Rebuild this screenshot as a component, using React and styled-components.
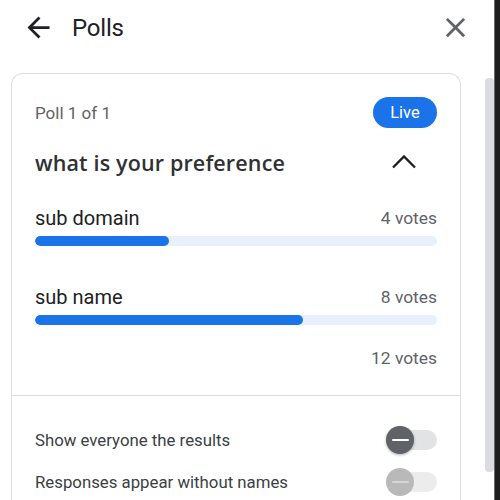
import React from "react";
import styled, { createGlobalStyle } from "styled-components";

const Global = createGlobalStyle`
  html, body { margin: 0; padding: 0; background: #ffffff; }
  body { font-family: Roboto, "Noto Sans", Arial, sans-serif; color: #202124; }
  * { box-sizing: border-box; }
`;

const Frame = styled.div`
  display: flex;
  width: 500px;
  height: 500px;
  overflow: hidden;
  background: #fff;
`;

const Content = styled.div`
  flex: 1;
  display: flex;
  flex-direction: column;
  min-width: 0;
`;

const Gutter = styled.div`
  width: 10px;
  padding: 78px 0 28px 1px;
  display: flex;
`;

const Thumb = styled.div`
  width: 9px;
  flex: 1;
  border-radius: 4px;
  background: #dadce0;
`;

const Edge = styled.div`
  width: 6px;
  background: #1e1e1f;
  border-left: 1px solid #6b6b6b;
`;

const Header = styled.header`
  height: 55px;
  flex-shrink: 0;
  display: flex;
  align-items: center;
  padding: 0 12px 0 22px;
`;

const IconButton = styled.div`
  width: 33px;
  height: 33px;
  display: flex;
  align-items: center;
  justify-content: center;
  color: ${(p) => p.$color || "#202124"};
  svg { display: block; }
`;

const Title = styled.h1`
  flex: 1;
  margin: 0 0 0 17px;
  font-size: 24px;
  font-weight: 400;
  color: #202124;
  letter-spacing: -0.2px;
`;

const Card = styled.section`
  margin: 18px 23px 0 11px;
  border: 1px solid #dadce0;
  border-bottom: none;
  border-radius: 12px 12px 0 0;
  flex: 1;
  display: flex;
  flex-direction: column;
`;

const PollBody = styled.div`
  padding: 23px 23px 25px 23px;
  display: flex;
  flex-direction: column;
`;

const Row = styled.div`
  display: flex;
  align-items: center;
  justify-content: ${(p) => (p.$end ? "flex-end" : "space-between")};
  height: ${(p) => p.$h || 24}px;
  margin-top: ${(p) => p.$mt || 0}px;
`;

const Meta = styled.span`
  font-size: 17px;
  color: #5f6368;
`;

const Badge = styled.span`
  width: 64px;
  height: 31px;
  border-radius: 16px;
  background: #1a73e8;
  color: #fff;
  font-size: 16.5px;
  display: flex;
  align-items: center;
  justify-content: center;
`;

const Question = styled.h2`
  margin: 0;
  font-family: "Open Sans", Roboto, sans-serif;
  font-size: 21.5px;
  font-weight: 600;
  letter-spacing: 0.15px;
  color: #303134;
`;

const ChevronBox = styled.div`
  width: 34px;
  display: flex;
  justify-content: center;
  margin-right: 16px;
  svg { display: block; }
`;

const Option = styled.div`
  display: flex;
  flex-direction: column;
  margin-top: ${(p) => p.$mt}px;
`;

const Label = styled.span`
  font-size: 20px;
  color: #202124;
`;

const Votes = styled.span`
  font-size: 17.4px;
  color: #5f6368;
`;

const Track = styled.div`
  margin-top: 6px;
  height: 10px;
  border-radius: 5px;
  background: #e8f0fe;
  overflow: hidden;
`;

const Fill = styled.div`
  height: 100%;
  border-radius: 5px;
  background: #1a73e8;
`;

const Settings = styled.div`
  border-top: 1px solid #dadce0;
  padding: 23px 23px 0 23px;
  display: flex;
  flex-direction: column;
`;

const SettingText = styled.span`
  font-size: 16.8px;
  color: #3c4043;
`;

const Switch = styled.div`
  position: relative;
  width: 50px;
  height: 20px;
`;

const SwitchTrack = styled.div`
  position: absolute;
  inset: 0;
  border-radius: 10px;
  background: ${(p) => (p.$muted ? "#ececec" : "#e2e3e5")};
`;

const SwitchThumb = styled.div`
  position: absolute;
  left: -1px;
  top: -4px;
  width: 28px;
  height: 28px;
  border-radius: 50%;
  background: ${(p) => (p.$muted ? "#b9b9b9" : "#5f6368")};
  box-shadow: ${(p) => (p.$muted ? "none" : "0 1px 3px rgba(0,0,0,0.3)")};
  display: flex;
  align-items: center;
  justify-content: center;
  &::after {
    content: "";
    width: 17px;
    height: 2.5px;
    border-radius: 1px;
    background: ${(p) => (p.$muted ? "#d6d6d6" : "#ffffff")};
  }
`;

const options = [
  { label: "sub domain", votes: 4 },
  { label: "sub name", votes: 8 },
];
const total = 12;

function Toggle({ muted }) {
  return (
    <Switch>
      <SwitchTrack $muted={muted} />
      <SwitchThumb $muted={muted} />
    </Switch>
  );
}

export default function App() {
  return (
    <>
      <Global />
      <Frame>
        <Content>
          <Header>
            <IconButton>
              <svg width="33" height="33" viewBox="0 0 24 24" fill="#202124">
                <path d="M20 11H7.83l5.59-5.59L12 4l-8 8 8 8 1.41-1.41L7.83 13H20v-2z" />
              </svg>
            </IconButton>
            <Title>Polls</Title>
            <IconButton $color="#5f6368">
              <svg width="33" height="33" viewBox="0 0 24 24" fill="#5f6368">
                <path d="M19 6.41 17.59 5 12 10.59 6.41 5 5 6.41 10.59 12 5 17.59 6.41 19 12 13.41 17.59 19 19 17.59 13.41 12z" />
              </svg>
            </IconButton>
          </Header>
          <Card>
            <PollBody>
              <Row $h={31}>
                <Meta>Poll 1 of 1</Meta>
                <Badge>Live</Badge>
              </Row>
              <Row $h={40} $mt={14}>
                <Question>what is your preference</Question>
                <ChevronBox>
                  <svg width="26" height="16" viewBox="0 0 26 16">
                    <polyline points="2,13.5 13,2.5 24,13.5" fill="none" stroke="#202124" strokeWidth="2.4" />
                  </svg>
                </ChevronBox>
              </Row>
              {options.map((o, i) => (
                <Option key={o.label} $mt={i === 0 ? 24 : 39}>
                  <Row>
                    <Label>{o.label}</Label>
                    <Votes>{o.votes} votes</Votes>
                  </Row>
                  <Track>
                    <Fill style={{ width: `${(o.votes / total) * 100}%` }} />
                  </Track>
                </Option>
              ))}
              <Row $mt={21} $end>
                <Votes>{total} votes</Votes>
              </Row>
            </PollBody>
            <Settings>
              <Row $h={42}>
                <SettingText>Show everyone the results</SettingText>
                <Toggle />
              </Row>
              <Row $h={42}>
                <SettingText>Responses appear without names</SettingText>
                <Toggle muted />
              </Row>
            </Settings>
          </Card>
        </Content>
        <Gutter>
          <Thumb />
        </Gutter>
        <Edge />
      </Frame>
    </>
  );
}
